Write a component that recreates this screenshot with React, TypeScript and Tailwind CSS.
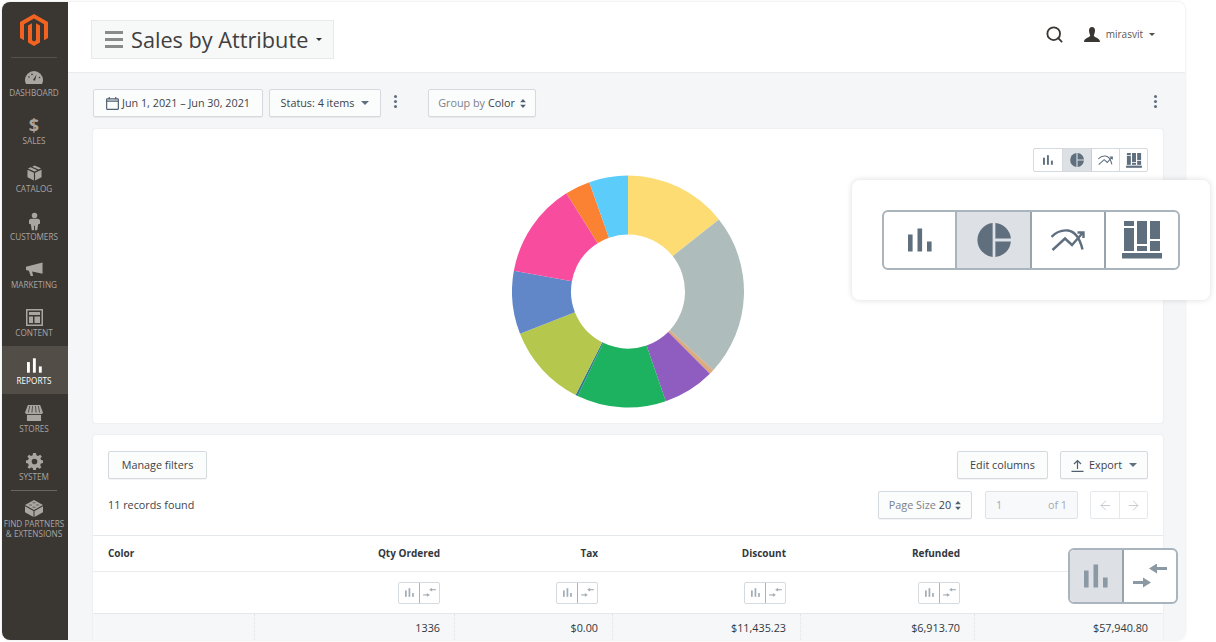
import { ReactNode } from "react";
import { ArrowLeft, ArrowRight, Search } from "lucide-react";

// donut slices, clockwise from 12 o'clock: [end angle, colour]
const slices: [number, string][] = [
  [51.6, "#fedc74"],
  [132.7, "#aebdbb"],
  [135.1, "#dcab7f"],
  [161, "#8f5cbf"],
  [205.7, "#1cb25f"],
  [206.9, "#2f7f8f"],
  [248.6, "#b5c84d"],
  [280.3, "#6187c9"],
  [327.9, "#f84d9f"],
  [340.5, "#fb8233"],
  [360, "#5ccdfb"],
];

function polar(r: number, deg: number) {
  const a = (deg * Math.PI) / 180;
  return `${(116 + r * Math.sin(a)).toFixed(2)} ${(116.5 - r * Math.cos(a)).toFixed(2)}`;
}

function Donut() {
  let start = 0;
  return (
    <svg width="232" height="233" viewBox="0 0 232 233">
      {slices.map(([end, color]) => {
        const large = end - start > 180 ? 1 : 0;
        const d = `M${polar(116, start)} A116 116 0 ${large} 1 ${polar(116, end)} L${polar(57, end)} A57 57 0 ${large} 0 ${polar(57, start)} Z`;
        start = end;
        return <path key={color} d={d} fill={color} />;
      })}
    </svg>
  );
}

function BarsIcon({ className }: { className?: string }) {
  return (
    <svg viewBox="0 0 24 23" className={className} fill="currentColor">
      <rect x="0" y="6" width="4.6" height="17" />
      <rect x="9.5" y="0" width="4.6" height="23" />
      <rect x="19" y="13" width="4.6" height="10" />
    </svg>
  );
}

function PieIcon({ className }: { className?: string }) {
  return (
    <svg viewBox="0 0 34 34" className={className} fill="currentColor">
      <path d="M15.6 0.1A17 17 0 0 0 15.6 33.9Z" />
      <path d="M18.4 0.1A17 17 0 0 1 33.9 15.6H18.4Z" />
      <path d="M18.4 18.4H33.9A17 17 0 0 1 18.4 33.9Z" />
    </svg>
  );
}

function LineIcon({ className }: { className?: string }) {
  return (
    <svg viewBox="0 0 34 23" className={className} fill="none" stroke="currentColor" strokeWidth="2.4">
      <path d="M0.500 8C6 2 12 1 17 1.500C24 2.500 29 10 31.500 20.500" />
      <path d="M1.500 21L14 9.500L21 16L32 3.500M26.500 3.500H32.500V9" />
    </svg>
  );
}

function BlocksIcon({ className }: { className?: string }) {
  return (
    <svg viewBox="-2 0 40 38" className={className} fill="currentColor">
      <rect x="0" y="0" width="10" height="5" />
      <rect x="0" y="7" width="10" height="23" />
      <rect x="13" y="0" width="10" height="23" />
      <rect x="13" y="25" width="10" height="5" />
      <rect x="26" y="0" width="10" height="18" />
      <rect x="26" y="20" width="10" height="10" />
      <rect x="-2" y="32" width="40" height="5.500" />
    </svg>
  );
}

function CompareIcon({ className }: { className?: string }) {
  return (
    <svg viewBox="0 0 34 24" className={className} fill="currentColor">
      <rect x="20" y="3" width="14" height="3" />
      <path d="M16 4.500L24 -0.500V9.500Z" />
      <rect x="0" y="17" width="13" height="3" />
      <path d="M18 18.500L10 13.500V23.500Z" />
    </svg>
  );
}

function Caret({ className }: { className?: string }) {
  return (
    <svg viewBox="0 0 8 4" className={className} fill="currentColor">
      <path d="M0 0H8L4 4Z" />
    </svg>
  );
}

function SortCaret({ className }: { className?: string }) {
  return (
    <svg viewBox="0 0 7 11" className={className} fill="#4f5f6e">
      <path d="M3.500 0L7 4H0Z" />
      <path d="M3.500 11L0 7H7Z" />
    </svg>
  );
}

function Dots({ className }: { className?: string }) {
  return (
    <div className={`flex flex-col gap-[2px] ${className ?? ""}`}>
      <span className="h-[3px] w-[3px] rounded-full bg-[#5f6f7e]" />
      <span className="h-[3px] w-[3px] rounded-full bg-[#5f6f7e]" />
      <span className="h-[3px] w-[3px] rounded-full bg-[#5f6f7e]" />
    </div>
  );
}

const navIcons: Record<string, ReactNode> = {
  DASHBOARD: (
    <svg viewBox="0 0 18 13" className="h-[13px] w-[18px]" fill="currentColor">
      <path d="M9 0A9 9 0 0 0 0 9C0 10.500 .3 11.800 1 13H17C17.700 11.800 18 10.500 18 9A9 9 0 0 0 9 0Z" />
      <path d="M8 9L11.500 3.500L10 9.800Z" fill="#3a3632" />
      <circle cx="4" cy="6" r=".8" fill="#3a3632" />
      <circle cx="7" cy="3.400" r=".8" fill="#3a3632" />
      <circle cx="14.500" cy="6.500" r=".8" fill="#3a3632" />
    </svg>
  ),
  SALES: <span className="text-[18px] font-bold leading-[18px]">$</span>,
  CATALOG: (
    <svg viewBox="0 0 16 16" className="h-[16px] w-[15px]" fill="currentColor">
      <path d="M8 0L15 3L12.500 4.300L5.500 1.200Z" />
      <path d="M3.800 1.900L11 5L8 6.500L1 3.200Z" />
      <path d="M.5 4.500L7.400 7.700V16L.5 12.500Z" />
      <path d="M15.500 4.500V12.500L8.600 16V7.700Z" />
    </svg>
  ),
  CUSTOMERS: (
    <svg viewBox="0 0 12 19" className="h-[19px] w-[11px]" fill="currentColor">
      <circle cx="6" cy="3" r="3" />
      <path d="M2.500 6.500H9.500C11 6.500 12 7.500 12 9V12L10 12.500L9 19H6.500V14H5.500V19H3L2 12.500L0 12V9C0 7.500 1 6.500 2.500 6.500Z" />
    </svg>
  ),
  MARKETING: (
    <svg viewBox="0 0 18 15" className="h-[15px] w-[17px]" fill="currentColor">
      <path d="M17.500 0V12L6.500 9.500L7.500 14.500H5L3 8.700L0 8V4.500Z" />
    </svg>
  ),
  CONTENT: (
    <svg viewBox="0 0 17 17" className="h-[17px] w-[17px]" fill="currentColor">
      <path fillRule="evenodd" d="M0 0H17V17H0ZM1.500 1.500V15.500H15.500V1.500Z" />
      <rect x="3" y="3" width="11" height="3" />
      <rect x="3" y="7.500" width="4" height="6.500" />
      <rect x="8.500" y="7.500" width="5.500" height="6.500" />
    </svg>
  ),
  REPORTS: <BarsIcon className="h-[15px] w-[15px]" />,
  STORES: (
    <svg viewBox="0 0 19 17" className="h-[16px] w-[18px]" fill="currentColor">
      <path d="M3 0H16L19 8C19 9 18 9.500 17.500 9.500H1.500C1 9.500 0 9 0 8Z" />
      <path d="M5 1L3.500 8M8 1L7.300 8M11 1L11.700 8M14 1L15.500 8" stroke="#3a3632" strokeWidth=".8" fill="none" />
      <path d="M2 10.500H17V17H2Z" />
    </svg>
  ),
  SYSTEM: (
    <svg viewBox="0 0 18 18" className="h-[17px] w-[17px]" fill="currentColor">
      <path
        fillRule="evenodd"
        d="M7.500 0H10.500L11 2.500L12.800 3.200L15 1.800L16.800 3.800L15.200 5.800L16 7.500L18 8V10.500L15.800 11L15 13L16.300 15L14.400 16.800L12.500 15.300L10.800 16L10.500 18H7.500L7.200 16L5.400 15.300L3.500 16.800L1.600 15L3 13L2.200 11L0 10.500V8L2.200 7.500L3 5.700L1.500 3.800L3.300 1.800L5.300 3.200L7 2.500ZM9 6A3 3 0 1 0 9 12A3 3 0 0 0 9 6Z"
      />
    </svg>
  ),
  LEGO: (
    <svg viewBox="0 0 18 17" className="h-[17px] w-[18px]" fill="currentColor">
      <path d="M9 0L18 5L9 10L0 5Z" />
      <path d="M0 6.300L8.500 11V17L0 12.300Z" />
      <path d="M18 6.300V12.300L9.500 17V11Z" />
      <ellipse cx="9" cy="2.800" rx="1.700" ry=".8" fill="#3a3632" opacity=".5" />
      <ellipse cx="5.500" cy="5" rx="1.700" ry=".8" fill="#3a3632" opacity=".5" />
      <ellipse cx="12.500" cy="5" rx="1.700" ry=".8" fill="#3a3632" opacity=".5" />
      <ellipse cx="9" cy="7.200" rx="1.700" ry=".8" fill="#3a3632" opacity=".5" />
    </svg>
  ),
};

const navItems = ["DASHBOARD", "SALES", "CATALOG", "CUSTOMERS", "MARKETING", "CONTENT", "REPORTS", "STORES", "SYSTEM"];

function Sidebar() {
  return (
    <aside className="flex w-[66px] shrink-0 flex-col bg-[#3a3632] text-[#a9a5a0]">
      <div className="ml-[9px] mr-[11px] flex h-[56px] shrink-0 items-start justify-center border-b border-[#56514c] pt-[12px]">
        <svg viewBox="0 0 28 32" className="h-[32px] w-[28px] shrink-0" fill="#f26322">
          <path d="M14 0L28 8V24L24 26.300V10.300L14 4.600L4 10.300V26.300L0 24V8Z" />
          <path d="M14 32L8 28.500V11.500L12 9.200V26.200L14 27.400L16 26.200V9.200L20 11.500V28.500Z" />
        </svg>
      </div>
      {navItems.map((name) => (
        <div
          key={name}
          className={`flex h-[48px] flex-col items-center justify-end pb-[8px] pr-[2px] ${name === "REPORTS" ? "bg-[#524d47] text-white" : ""}`}
        >
          <div className="flex h-[20px] items-center justify-center">{navIcons[name]}</div>
          <span className="mt-[1px] text-[8.2px] leading-[10px]">{name}</span>
        </div>
      ))}
      <div className="ml-[9px] mr-[11px] flex flex-col items-center border-t border-[#6a655f] pt-[9px] text-[8.2px] leading-[10px]">
        {navIcons.LEGO}
        <span className="mt-[2px] whitespace-nowrap">FIND PARTNERS</span>
        <span className="whitespace-nowrap">&amp; EXTENSIONS</span>
      </div>
    </aside>
  );
}

function Button({ className, children }: { className?: string; children: ReactNode }) {
  return (
    <div className={`flex h-[28px] items-center justify-center rounded-[2px] border border-[#d5dadf] bg-[#fbfcfc] text-[10.8px] text-[#3d4348] shadow-[0_1px_1px_rgba(0,0,0,0.05)] ${className ?? ""}`}>
      {children}
    </div>
  );
}

function MiniToggle() {
  return (
    <div className="flex h-[22px] w-[42px] rounded-[2px] border border-[#d5dadf] text-[#a2adb6]">
      <div className="flex w-[21px] items-center justify-center border-r border-[#a9b3bb]">
        <BarsIcon className="h-[9px] w-[9px]" />
      </div>
      <div className="flex flex-1 items-center justify-center">
        <CompareIcon className="h-[9px] w-[13px]" />
      </div>
    </div>
  );
}

const columns = [
  { name: "Color", value: "" },
  { name: "Qty Ordered", value: "1336" },
  { name: "Tax", value: "$0.00" },
  { name: "Discount", value: "$11,435.23" },
  { name: "Refunded", value: "$6,913.70" },
  { name: "", value: "$57,940.80" },
];

const gridCols = "grid grid-cols-[162px_200px_158px_188px_174px_188px]";

function DataTable() {
  return (
    <div className="mt-[16px] border-t border-[#e6e9ec]">
      <div className={`${gridCols} h-[36px] items-center border-b border-[#e9ecef] text-[10px] font-bold text-[#33383d]`}>
        {columns.map((c, i) => (
          <div key={i} className={i === 0 ? "pl-[15px]" : "pr-[15px] text-right"}>
            {c.name}
          </div>
        ))}
      </div>
      <div className={`${gridCols} h-[42px] items-center border-b border-[#e6e9ec]`}>
        {columns.map((c, i) => (
          <div key={i} className="flex justify-end pr-[15px]">
            {i > 0 && i < 5 && <MiniToggle />}
          </div>
        ))}
      </div>
      <div className={`${gridCols} h-[28px] bg-[#f5f7f8] text-[10.8px] font-medium text-[#33383d]`}>
        {columns.map((c, i) => (
          <div key={i} className={`flex items-center justify-end ${i < 5 ? "border-r border-dotted border-[#e1e4e7] pr-[14px]" : "pr-[15px]"}`}>
            {c.value}
          </div>
        ))}
      </div>
    </div>
  );
}

export default function App() {
  return (
    <div className="relative h-[642px] w-[1216px] overflow-hidden bg-white pl-[2px] pt-[2px] font-['Open_Sans',sans-serif]">
      <div className="flex h-[638px] w-[1183px] overflow-hidden rounded-[8px] shadow-[0_0_3px_rgba(0,0,0,0.12)]">
        <Sidebar />
        <main className="flex min-w-0 flex-1 flex-col bg-[#f4f6f8]">
          <header className="flex h-[71px] shrink-0 items-center justify-between border-b border-[#e9ebed] bg-white pl-[23px] pr-[30px]">
            <div className="mt-[5px] flex h-[39px] w-[243px] items-center border border-[#e8e9ea] bg-[#f7f8f8] pl-[13px]">
              <div className="flex w-[18px] shrink-0 flex-col gap-[4px]">
                <span className="h-[3px] bg-[#8a8a8a]" />
                <span className="h-[3px] bg-[#8a8a8a]" />
                <span className="h-[3px] bg-[#8a8a8a]" />
              </div>
              <span className="ml-[8px] whitespace-nowrap text-[21.7px] leading-none text-[#41403f]">Sales by Attribute</span>
              <Caret className="ml-[8px] h-[3px] w-[6px] shrink-0 text-[#303030]" />
            </div>
            <div className="mb-[5px] flex items-center text-[#3a3632]">
              <Search className="h-[19px] w-[19px]" strokeWidth={2.300} />
              <svg viewBox="0 0 16 15" className="ml-[20px] h-[15px] w-[16px]" fill="currentColor">
                <path d="M8 0C10 0 11 1.500 11 3.500C11 6 10 7.500 9.800 8.800C10.500 10.500 16 11 16 15H0C0 11 5.500 10.500 6.200 8.800C6 7.500 5 6 5 3.500C5 1.500 6 0 8 0Z" />
              </svg>
              <span className="ml-[6px] text-[10px] text-[#5b5753]">mirasvit</span>
              <Caret className="ml-[6px] h-[3px] w-[6px] text-[#514d49]" />
            </div>
          </header>

          <div className="flex flex-1 flex-col pl-[25px] pr-[22px]">
            <div className="mt-[16px] flex h-[28px] shrink-0 items-center">
              <Button className="w-[170px]">
                <svg viewBox="0 0 12 12" className="mr-[3px] h-[13px] w-[13px]" fill="none" stroke="#4f5f6e" strokeWidth="1.100">
                  <rect x=".6" y="1.800" width="10.800" height="9.600" rx=".5" />
                  <path d="M.6 3.800H11.400M3 0V2M9 0V2" />
                </svg>
                Jun 1, 2021 – Jun 30, 2021
              </Button>
              <Button className="ml-[6px] w-[112px]">
                Status: 4 items
                <Caret className="ml-[7px] h-[4px] w-[8px] text-[#5f6f7e]" />
              </Button>
              <Dots className="mb-[3px] ml-[13px]" />
              <Button className="ml-[31px] w-[108px]">
                <span className="text-[#7a828a]">Group by</span>
                <span className="ml-[3px]">Color</span>
                <SortCaret className="ml-[5px] h-[9px] w-[6px]" />
              </Button>
              <Dots className="mb-[3px] ml-auto mr-[6px]" />
            </div>

            <section className="mt-[12px] flex h-[294px] shrink-0 flex-col rounded-[3px] bg-white shadow-[0_0_2px_rgba(0,0,0,0.1)]">
              <div className="mr-[15px] mt-[19px] flex h-[24px] w-[115px] self-end rounded-[2px] border border-[#d5dadf] text-[#5f6f7e]">
                <div className="flex w-[29px] items-center justify-center border-r border-[#d5dadf]"><BarsIcon className="h-[10px] w-[10px]" /></div>
                <div className="flex w-[29px] items-center justify-center border-r border-[#c5ccd2] bg-[#dde1e5]"><PieIcon className="h-[14px] w-[14px]" /></div>
                <div className="flex w-[28px] items-center justify-center border-r border-[#d5dadf]"><LineIcon className="h-[11px] w-[15px]" /></div>
                <div className="flex flex-1 items-center justify-center"><BlocksIcon className="h-[15px] w-[16px]" /></div>
              </div>
              <div className="mt-[3px] flex justify-center">
                <Donut />
              </div>
            </section>

            <section className="mt-[12px] flex-1 rounded-t-[3px] bg-white shadow-[0_0_2px_rgba(0,0,0,0.1)]">
              <div className="flex items-center justify-between px-[15px] pt-[16px]">
                <Button className="w-[99px]">Manage filters</Button>
                <div className="flex">
                  <Button className="w-[91px]">Edit columns</Button>
                  <Button className="ml-[12px] w-[88px]">
                    <svg viewBox="0 0 13 13" className="mr-[5px] h-[13px] w-[13px]" fill="none" stroke="#4f5f6e" strokeWidth="1.200">
                      <path d="M6.500 10V1.500M3 5L6.500 1.500L10 5M.5 12.400H12.500" />
                    </svg>
                    Export
                    <Caret className="ml-[7px] h-[4px] w-[8px] text-[#5f6f7e]" />
                  </Button>
                </div>
              </div>
              <div className="mt-[12px] flex items-center justify-between px-[15px]">
                <span className="text-[10.8px] text-[#3d4348]">11 records found</span>
                <div className="flex">
                  <Button className="w-[94px]">
                    <span className="text-[#7a828a]">Page Size</span>
                    <span className="ml-[3px]">20</span>
                    <SortCaret className="ml-[4px] h-[9px] w-[6px]" />
                  </Button>
                  <div className="ml-[13px] flex h-[28px] w-[93px] items-center justify-between rounded-[2px] border border-[#dfe3e6] bg-[#f8f9fa] px-[10px] text-[10.8px] text-[#a3abb2]">
                    <span>1</span>
                    <span>of 1</span>
                  </div>
                  <div className="ml-[12px] flex h-[28px] w-[58px] rounded-[2px] border border-[#e6e9ec] text-[#c3cad0]">
                    <div className="flex w-[29px] items-center justify-center border-r border-[#e6e9ec]"><ArrowLeft className="h-[15px] w-[15px]" strokeWidth={1.500} /></div>
                    <div className="flex flex-1 items-center justify-center"><ArrowRight className="h-[15px] w-[15px]" strokeWidth={1.500} /></div>
                  </div>
                </div>
              </div>
              <DataTable />
            </section>
          </div>
        </main>
      </div>

      {/* magnified chart type switch */}
      <div className="absolute left-[852px] top-[180px] flex h-[120px] w-[358px] items-center justify-center rounded-[8px] bg-white shadow-[0_0_6px_rgba(0,0,0,0.14)]">
        <div className="flex h-[60px] w-[298px] overflow-hidden rounded-[6px] border-2 border-[#aab4bc] text-[#5f6f7e]">
          <div className="flex w-[73px] items-center justify-center border-r-2 border-[#aab4bc]"><BarsIcon className="h-[24px] w-[24px]" /></div>
          <div className="flex w-[75px] items-center justify-center border-r-2 border-[#98a3ac] bg-[#dde1e5]"><PieIcon className="h-[34px] w-[34px]" /></div>
          <div className="flex w-[74px] items-center justify-center border-r-2 border-[#98a3ac]"><LineIcon className="h-[23px] w-[34px]" /></div>
          <div className="flex flex-1 items-center justify-center"><BlocksIcon className="h-[38px] w-[40px]" /></div>
        </div>
      </div>

      {/* magnified column toggle */}
      <div className="absolute left-[1068px] top-[548px] flex h-[56px] w-[110px] overflow-hidden rounded-[6px] border-2 border-[#aab4bc] bg-white text-[#8b99a5]">
        <div className="flex w-[54px] items-center justify-center border-r-2 border-[#98a3ac] bg-[#dde1e5]"><BarsIcon className="h-[24px] w-[24px]" /></div>
        <div className="flex flex-1 items-center justify-center"><CompareIcon className="h-[24px] w-[34px]" /></div>
      </div>
    </div>
  );
}
